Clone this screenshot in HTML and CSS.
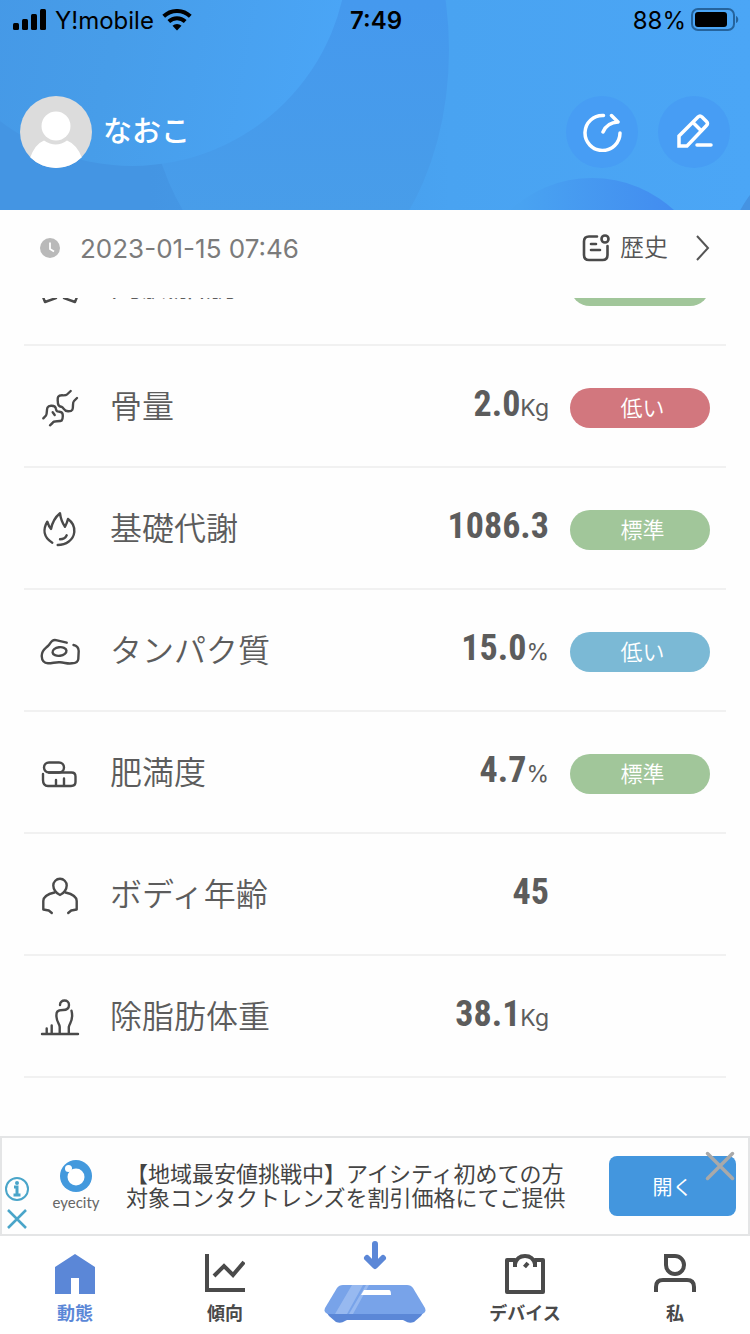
FILE: index.html
```html
<!DOCTYPE html>
<html lang="ja">
<head>
    <meta charset="UTF-8">
    <meta name="viewport" content="width=device-width, initial-scale=1.0">
    <title>動態</title>
    <link rel="stylesheet" href="styles.css">
</head>
<body>
    <header class="header">
        <svg class="header-bg" viewBox="0 0 750 210" preserveAspectRatio="none" aria-hidden="true">
            <defs>
                <linearGradient id="g1" x1="0" y1="0" x2="1" y2="0"><stop offset="0.2" stop-color="#4495e3"/><stop offset="0.6" stop-color="#49a3f1"/><stop offset="1" stop-color="#4ba6f6"/></linearGradient>
                <linearGradient id="g2" x1="0" y1="0.4" x2="0" y2="0.85"><stop offset="0" stop-color="#4599ee"/><stop offset="1" stop-color="#489de9"/></linearGradient>
                <linearGradient id="g3" x1="0" y1="0.4" x2="1" y2="0.6"><stop offset="0" stop-color="#4496e5"/><stop offset="0.5" stop-color="#479de9"/><stop offset="1" stop-color="#4aa5f6"/></linearGradient>
                <linearGradient id="g4" x1="0" y1="0" x2="1" y2="0"><stop offset="0.2" stop-color="#49a3f1"/><stop offset="0.85" stop-color="#428cf0"/></linearGradient>
            </defs>
            <rect width="750" height="210" fill="url(#g1)"/>
            <ellipse cx="296" cy="50" rx="153" ry="238" fill="url(#g2)"/>
            <circle cx="132" cy="-50" r="216" fill="url(#g3)"/>
            <circle cx="592" cy="299" r="121" fill="url(#g4)"/>
            <circle cx="850" cy="270" r="125" fill="#4593e2"/>
        </svg>
        <div class="status-bar">
            <div class="status-left">
                <svg width="34" height="22" viewBox="0 0 34 22"><rect x="0" y="14" width="6" height="7" rx="1.5"/><rect x="9" y="10" width="6" height="11" rx="1.5"/><rect x="18" y="5" width="6" height="16" rx="1.5"/><rect x="27" y="0" width="6" height="21" rx="1.5"/></svg>
                <span>Y!mobile</span>
                <svg width="30" height="22" viewBox="0 0 30 22"><path d="M15 21.500l-4.500-4.700a6.500 6.500 0 0 1 9 0z"/><path d="M6.800 12.500a12 12 0 0 1 16.400 0M1.700 7.300a19.300 19.300 0 0 1 26.600 0" fill="none" stroke="#000" stroke-width="4"/></svg>
            </div>
            <time class="status-time">7:49</time>
            <div class="status-right">
                <span>88%</span>
                <svg width="48" height="24" viewBox="0 0 48 24"><rect x="1" y="1" width="42" height="21" rx="6" fill="none" stroke="#25639c" stroke-width="2"/><rect x="4" y="4" width="32" height="15" rx="3"/><path d="M45 8c3 1 3 6 0 7z" fill="#25639c"/></svg>
            </div>
        </div>
        <div class="profile">
            <svg class="avatar" viewBox="0 0 72 72"><defs><clipPath id="round"><circle cx="36" cy="36" r="36"/></clipPath></defs><g clip-path="url(#round)"><rect width="72" height="72" fill="#dcdcdc"/><path d="M10 62q5-14 14-17.500q12 8 23 0q10 4 15 17.500v10h-52z" fill="#fff"/><circle cx="36" cy="30" r="14.500" fill="#fff"/></g></svg>
            <h1 class="name">なおこ</h1>
            <button class="round-button" aria-label="共有">
                <svg width="40" height="40" viewBox="0 0 40 40"><path d="M21.500 3.500A17.500 17.500 0 1 0 38 21M21 20q4-9.500 15-10M29.500 3.500l6.500 6.500"/></svg>
            </button>
            <button class="round-button" aria-label="編集">
                <svg width="40" height="40" viewBox="0 0 40 40"><path d="M5 34V24L24 5q2-2 4 0l4.500 4.500q2 2 0 4L13 34zM19 10.500l8 8M23 33h14"/></svg>
            </button>
        </div>
    </header>

    <div class="record-bar">
        <svg width="20" height="20" viewBox="0 0 20 20"><circle cx="10" cy="10" r="10" fill="#b9b9b9"/><path d="M10 4.500v6.500l4 2.500" fill="none" stroke="#fff" stroke-width="1.800"/></svg>
        <time class="record-date">2023-01-15 07:46</time>
        <a class="history" href="#">
            <svg width="28" height="28" viewBox="0 0 28 28" fill="none" stroke="#4a4a4a" stroke-width="2.600" stroke-linecap="round"><path d="M15 2.500H7q-5 0-5 5v13.500q0 5 5 5h13.500q5 0 5-5V12M9 10h5M9 16h9"/><circle cx="23" cy="5" r="3.500"/></svg>
            <span>歴史</span>
            <svg class="chevron" width="14" height="26" viewBox="0 0 14 26" fill="none" stroke="#555" stroke-width="2"><path d="M1 1l11 12L1 25"/></svg>
        </a>
    </div>

    <main class="metrics">
        <ul class="metric-list">
            <li class="metric">
                <svg class="metric-icon" viewBox="0 0 40 40"><path d="M3 31l2 5 11-4M37 31l-2 5-11-4"/></svg>
                <span class="metric-label">内臓脂肪</span>
                <span class="metric-value">5.0</span>
                <span class="badge green">標準</span>
            </li>
            <li class="metric">
                <svg class="metric-icon" viewBox="0 0 40 40"><path d="M30.700 3L27 6.500Q26 7.500 22 7.300C18 7.300 17.500 9 17.700 12.500C17.800 17 18.500 18.500 22 19C24 20 23.500 23 28 23.300C33 23.500 33 21 33 17Q33 14 34 13L37 10M3.300 30.300L6 27.500C8 24 5 18 11 17.700Q15.500 17.500 16 21C16.500 24 17.500 23.500 19.500 23.700Q23 24 22.800 28C22.700 33 22 33.300 17 33.300Q13.500 33.300 12.500 35L10 37.300M12.700 24.300l2 2.700"/></svg>
                <span class="metric-label">骨量</span>
                <span class="metric-value">2.0<small>Kg</small></span>
                <span class="badge red">低い</span>
            </li>
            <li class="metric">
                <svg class="metric-icon" viewBox="0 0 40 40"><path d="M12.300 32.700C3 27 3 19 7.300 11.700Q9 17 11 19Q13 9 20 3.300Q21 11 25 16.700Q27 13 28 9Q35 14 34.300 22C33.500 30 26 35 17.700 35M20 29.300q5 0 6.700-4"/></svg>
                <span class="metric-label">基礎代謝</span>
                <span class="metric-value">1086.3</span>
                <span class="badge green">標準</span>
            </li>
            <li class="metric">
                <svg class="metric-icon" viewBox="0 0 40 40"><path d="M26.700 10.700L17 8.300C11 7 11 11 8.300 13.700C5 17 1.700 18 1.700 24Q2 31 8 31.300C13 31.300 15 30 20 30.300C25 30.500 27 32 32 31.300Q38 31 38.300 27L38.700 19Q38.500 14 33.500 13"/><ellipse cx="19.500" cy="19.500" rx="7" ry="4.300" transform="rotate(-8 19.500 19.500)"/></svg>
                <span class="metric-label">タンパク質</span>
                <span class="metric-value">15.0<small>%</small></span>
                <span class="badge blue">低い</span>
            </li>
            <li class="metric">
                <svg class="metric-icon" viewBox="0 0 40 40"><rect x="4" y="8.500" width="20" height="10" rx="5"/><path d="M3 20v6q0 6 5 6h23q4.500 0 4.500-4v-5.500q0-4-4-4H9M16 31v-5M24 31v-6.500"/></svg>
                <span class="metric-label">肥満度</span>
                <span class="metric-value">4.7<small>%</small></span>
                <span class="badge green">標準</span>
            </li>
            <li class="metric">
                <svg class="metric-icon" viewBox="0 0 40 40"><path d="M14.500 16.500Q3.500 19 3.300 25v8.500l5.500 1 3 2.500M25.500 16.500Q36.500 19 36.700 25v8.500l-5.500 1-3 2.500"/><path d="M20 19C16 17.500 13.300 13 13.300 9.500a6.700 6.700 0 0 1 13.400 0C26.700 13 24 17.500 20 19z"/></svg>
                <span class="metric-label">ボディ年齢</span>
                <span class="metric-value">45</span>
            </li>
            <li class="metric">
                <svg class="metric-icon" viewBox="0 0 40 40"><path d="M20 7C20 1 29 1 29 7Q29 12 23 12C17 12 16 14 16.500 19C17 25 19.500 25 19.700 29V35M31.500 12.700C34 22 29.500 25 28.800 29V35M2 36h36M6.700 35v-4.500M11.700 35v-7.500"/></svg>
                <span class="metric-label">除脂肪体重</span>
                <span class="metric-value">38.1<small>Kg</small></span>
            </li>
        </ul>
    </main>

    <aside class="ad">
        <div class="ad-marks">
            <svg width="24" height="24" viewBox="0 0 24 24" fill="none" stroke="#4aa5c9" stroke-width="2"><circle cx="12" cy="12" r="11"/><path d="M9 10h3v8M8.500 18h7" stroke-width="3"/><circle cx="12" cy="6" r="1" stroke-width="2"/></svg>
            <svg width="24" height="24" viewBox="0 0 24 24" fill="none" stroke="#4aa5c9" stroke-width="2.500"><path d="M3 3l18 18M21 3L3 21"/></svg>
        </div>
        <div class="ad-logo">
            <svg width="32" height="32" viewBox="0 0 32 32"><circle cx="16" cy="16" r="16" fill="#4399dd"/><circle cx="16" cy="17" r="8.500" fill="#fff"/><circle cx="8.500" cy="8.500" r="3.500" fill="#fff"/></svg>
            <span>eyecity</span>
        </div>
        <p class="ad-text">【地域最安値挑戦中】アイシティ初めての方<br>対象コンタクトレンズを割引価格にてご提供</p>
        <button class="ad-open">開く</button>
        <button class="ad-close" aria-label="閉じる">
            <svg width="30" height="30" viewBox="0 0 30 30" fill="none" stroke="#a9a9a9" stroke-width="3.500" stroke-linecap="round"><path d="M2.500 2.500l25 25M27.500 2.500l-25 25"/></svg>
        </button>
    </aside>

    <nav class="tabs">
        <a class="tab active" href="#">
            <svg width="40" height="40" viewBox="0 0 40 40"><path d="M0 13L20 0l20 13v27H24V24h-8v16H0z" fill="#5b87d7"/></svg>
            <span>動態</span>
        </a>
        <a class="tab" href="#">
            <svg width="40" height="40" viewBox="0 0 40 40" fill="none" stroke="#4a4a4a" stroke-width="4"><path d="M2 0v36h38M9 22l10-10 9 9L39 8"/></svg>
            <span>傾向</span>
        </a>
        <a class="tab tab-scale" href="#" aria-label="測定">
            <svg width="102" height="84" viewBox="0 0 102 84"><path d="M51 4v20M43 18l8 8 8-8" fill="none" stroke="#5b87d7" stroke-width="6" stroke-linecap="round" stroke-linejoin="round"/><path d="M1 70l4 6 7 6q5 2 9-1l2-1h56l2 1q4 3 9 1l7-6 4-6z" fill="#5b87d7"/><path d="M19 45h64q4 0 6 3l12 20q2 6-5 6H6q-7 0-5-6l12-20q2-3 6-3z" fill="#78a3e9"/><path d="M28 45h11L23 74H11zM42 45h3L29 74h-4z" fill="#97b9f0"/><path d="M40 50h25q2 0 2 5H37z" fill="#fff"/></svg>
        </a>
        <a class="tab" href="#">
            <svg width="40" height="40" viewBox="0 0 40 40" fill="none" stroke="#4a4a4a" stroke-width="4" stroke-linejoin="round"><path d="M10 13V6H2v32h36V6h-8v7M10 10Q12 2 20 2t10 8M19.500 13l3.500-4"/></svg>
            <span>デバイス</span>
        </a>
        <a class="tab" href="#">
            <svg width="42" height="40" viewBox="0 0 42 40" fill="none" stroke="#4a4a4a" stroke-width="4"><path d="M12 2h9a9 9 0 1 1-9 9zM2 38v-5q0-7 7-7h24q7 0 7 7v5"/></svg>
            <span>私</span>
        </a>
    </nav>
</body>
</html>
```

FILE: styles.css
```css
* {
    box-sizing: border-box;
}
body {
    margin: 0;
    height: 100vh;
    display: flex;
    flex-direction: column;
    background: #fefefe;
    color: #5c5c5c;
    font-family: "Inter", "Noto Sans CJK JP", sans-serif;
}
a {
    color: inherit;
    text-decoration: none;
}
button {
    border: none;
    padding: 0;
    font-family: inherit;
    cursor: pointer;
}
svg {
    display: block;
    flex: none;
}

/* header */
.header {
    position: relative;
    flex: none;
    height: 210px;
}
.header-bg {
    position: absolute;
    inset: 0;
    width: 100%;
    height: 100%;
    z-index: -1;
}
.status-bar {
    display: grid;
    grid-template-columns: 1fr auto 1fr;
    align-items: center;
    height: 40px;
    padding: 0 11px 0 13px;
    color: #000;
    font-size: 24px;
}
.status-left,
.status-right {
    display: flex;
    align-items: center;
    gap: 8px;
}
.status-right {
    justify-content: flex-end;
    gap: 5px;
}
.status-time {
    font-weight: 600;
}
.profile {
    display: flex;
    align-items: center;
    padding: 56px 20px 0;
}
.avatar {
    width: 72px;
    height: 72px;
}
.name {
    flex: 1;
    margin: 0 0 0 11px;
    color: #fff;
    font-size: 29px;
    font-weight: 500;
    line-height: 40px;
}
.round-button {
    display: grid;
    place-items: center;
    width: 72px;
    height: 72px;
    margin-left: 20px;
    border-radius: 50%;
    background: #479df4;
}
.round-button svg {
    fill: none;
    stroke: #fff;
    stroke-width: 3.5;
    stroke-linecap: round;
}

/* date and history link */
.record-bar {
    display: flex;
    flex: none;
    align-items: center;
    height: 88px;
    padding: 0 40px 12px;
}
.record-date {
    flex: 1;
    margin-left: 20px;
    color: #7b7b7b;
    font-size: 26px;
}
.history {
    display: flex;
    align-items: center;
    gap: 10px;
    color: #555;
    font-size: 24px;
    font-weight: 350;
    line-height: 32px;
}
.chevron {
    margin-left: 18px;
}

/* metrics */
.metrics {
    display: flex;
    flex: 1;
    flex-direction: column;
    justify-content: flex-end;
    min-height: 0;
    overflow: hidden;
    padding: 0 24px 58px;
}
.metric-list {
    margin: 0;
    padding: 0;
    list-style: none;
}
.metric {
    display: grid;
    grid-template-columns: 40px 1fr auto 140px;
    align-items: center;
    height: 122px;
    padding: 4px 16px 0;
    border-bottom: 2px solid #f1f1f1;
}
.metric-icon {
    width: 40px;
    height: 40px;
    fill: none;
    stroke: #4a4a4a;
    stroke-width: 2.4;
    stroke-linecap: round;
    stroke-linejoin: round;
}
.metric-label {
    margin-left: 30px;
    padding-bottom: 2px;
    font-size: 32px;
    font-weight: 350;
    line-height: 40px;
}
.metric-value {
    margin-right: 21px;
    padding-bottom: 8px;
    font-family: "Roboto Condensed", sans-serif;
    font-size: 36px;
    font-weight: 700;
    line-height: 48px;
}
.metric-value small {
    font-family: "Inter", sans-serif;
    font-size: 23px;
    font-weight: 400;
    line-height: 24px;
}
.badge {
    height: 40px;
    padding-left: 5px;
    border-radius: 20px;
    color: #fff;
    font-size: 22px;
    font-weight: 350;
    line-height: 40px;
    text-align: center;
}
.green { background: #a1c69a; }
.red { background: #d2777e; }
.blue { background: #7bb9d5; }

/* ad */
.ad {
    position: relative;
    display: flex;
    flex: none;
    align-items: center;
    height: 100px;
    padding-right: 12px;
    border: 2px solid #e4e5e6;
}
.ad-marks {
    display: flex;
    flex-direction: column;
    gap: 6px;
    margin-left: 3px;
    padding-top: 36px;
}
.ad-logo {
    display: flex;
    flex-direction: column;
    align-items: center;
    width: 50px;
    margin-left: 22px;
    color: #666;
    font-family: "Lato", sans-serif;
    font-size: 15px;
    line-height: 20px;
}
.ad-text {
    flex: 1;
    margin: 0 0 0 25px;
    color: #444;
    font-size: 22px;
    line-height: 24px;
    white-space: nowrap;
}
.ad-open {
    width: 127px;
    height: 60px;
    border-radius: 8px;
    background: #4396de;
    color: #fff;
    font-size: 20px;
}
.ad-close {
    position: absolute;
    top: 13px;
    right: 13px;
    background: none;
}

/* tab bar */
.tabs {
    display: grid;
    flex: none;
    grid-template-columns: repeat(5, 1fr);
    height: 98px;
    background: #fff;
}
.tab {
    display: flex;
    flex-direction: column;
    align-items: center;
    gap: 8px;
    padding-top: 18px;
    color: #4a4a4a;
    font-size: 18px;
    font-weight: 700;
    line-height: 24px;
}
.tab-scale {
    padding-top: 4px;
}
.active {
    color: #5b87d7;
}
```
